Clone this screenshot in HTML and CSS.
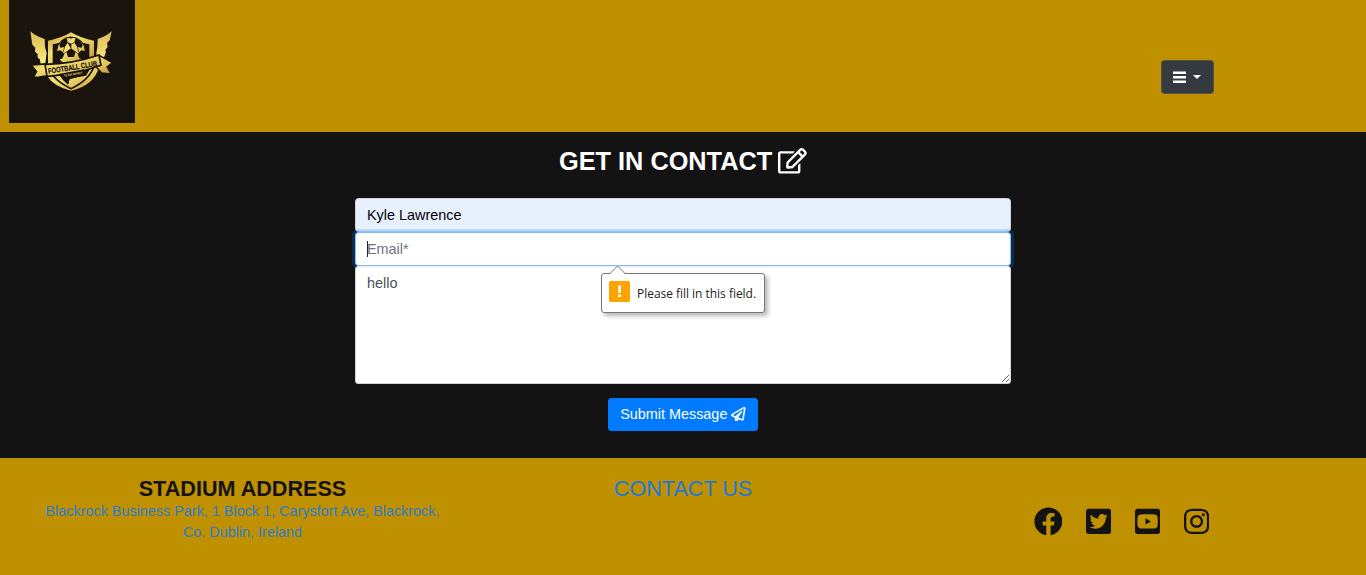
FILE: index.html
```html
<!DOCTYPE html>
<html lang="en">
<head>
<meta charset="utf-8">
<title>Contact</title>
<link rel="stylesheet" href="styles.css">
</head>
<body>
<header class="header">
  <svg class="logo" viewBox="27 0 378 369">
    <defs>
      <linearGradient id="gold" x1="0" y1="0" x2="1" y2="1">
        <stop offset="0" stop-color="#c99543"/><stop offset=".35" stop-color="#f3df72"/><stop offset=".65" stop-color="#e5c45c"/><stop offset="1" stop-color="#b98238"/>
      </linearGradient>
      <linearGradient id="wing" x1="0" y1="0" x2="0" y2="1">
        <stop offset="0" stop-color="#e0b955"/><stop offset="1" stop-color="#f7ee80"/>
      </linearGradient>
    </defs>
    <rect x="27" width="378" height="369" fill="#1a140f"/>
    <path fill="url(#wing)" d="M91 94q18 16 43 23l1 24 5 18-4 31-14 1-3-14-6-4v-11l-8-7 1-12-9-9zM335 94q-18 16-42 23l-1 24-3 18 2 14 22-3 5-14-2-6 7-9-2-12 8-8z"/>
    <path fill="url(#gold)" d="M144 122q37-6 69-25 32 19 69 25v50l-14 6v-45q-30-5-55-19-25 14-55 19v58l-14 5z"/>
    <path fill="url(#gold)" d="M213 272q-52-12-71-43l45-5q10 20 20 29l-4-17 55-9 17-28 23-1q-15 59-85 74z"/>
    <path fill="none" stroke="#1a140f" stroke-width="5" d="M158 226q20 24 55 40 55-25 69-67"/>
    <circle cx="213" cy="154" r="43" fill="url(#gold)" stroke="#1a140f" stroke-width="3"/>
    <path fill="#1a140f" d="M213 145l14 10-5 16h-18l-5-16zM186 121l14-7 3 14-9 13-13 2-3-8zM240 121l-14-7-3 14 9 13 13 2 3-8zM171 153l11-2 11 10-5 14-13 5q-6-13-4-27zM255 153l-11-2-11 10 5 14 13 5q6-13 4-27zM205 111h16l-8 5z"/>
    <path stroke="#1a140f" stroke-width="2" d="M213 145v-13l-10-4M213 132l10-4M199 155l-7 6M227 155l6 6M194 141l-5 15M232 141l5 15"/>
    <path fill="url(#gold)" stroke="#1a140f" stroke-width="4" d="M94 195l44-3 4 35-24 4-18 1 10-17zM297 166l40 22-16 13 12 21-28-3-18-20z"/>
    <path fill="url(#gold)" stroke="#1a140f" stroke-width="5" d="M135 193q84-1 162-28l6 31q-78 28-162 33z"/>
    <text class="logo-name" transform="rotate(-9 217 198) translate(143 210)" textLength="148" lengthAdjust="spacingAndGlyphs">FOOTBALL CLUB</text>
    <path fill="#1a140f" d="M176 222l76-14-7 20-36 10-5 16q-17-13-28-32z"/>
    <text class="logo-tag" transform="rotate(-9 217 222) translate(191 226)" textLength="56" lengthAdjust="spacingAndGlyphs">TEAM SPIRIT</text>
  </svg>
  <button class="menu" type="button" aria-label="Menu">
    <svg class="bars" viewBox="0 0 13 13"><path fill="#fff" d="M0 .5h13v2.6H0zM0 5h13v2.6H0zM0 9.5h13v2.6H0z"/></svg>
    <span class="caret"></span>
  </button>
</header>
<main class="contact">
  <h1 class="title">GET IN CONTACT
    <svg class="edit" viewBox="0 0 576 512"><path fill="currentColor" d="M402.3 344.9l32-32c5-5 13.7-1.5 13.7 5.7V464c0 26.5-21.5 48-48 48H48c-26.5 0-48-21.5-48-48V112c0-26.5 21.5-48 48-48h273.5c7.1 0 10.7 8.6 5.7 13.7l-32 32c-1.5 1.5-3.5 2.3-5.7 2.3H48v352h352V350.5c0-2.1.8-4.1 2.3-5.6zm156.6-201.8L296.3 405.7l-90.4 10c-26.2 2.9-48.5-19.2-45.6-45.6l10-90.4L432.9 17.1c22.9-22.9 59.9-22.9 82.7 0l43.2 43.2c22.9 22.9 22.9 60 .1 82.8zM460.1 174L402 115.9 216.2 301.8l-7.3 65.3 65.3-7.3L460.1 174zm64.8-79.7l-43.2-43.2c-4.1-4.1-10.8-4.1-14.8 0L436 82l58.1 58.1 30.9-30.9c4-4.2 4-10.8-.1-14.9z"/></svg>
  </h1>
  <form class="form">
    <input class="field filled" value="Kyle Lawrence">
    <div class="email">
      <input class="field focused" placeholder="Email*">
      <span class="cursor"></span>
      <div class="tip">
        <svg class="tip-arrow" viewBox="0 0 16 9"><path fill="#fff" stroke="#777" d="M0 8.5L7.5 1l7.5 7.5"/><path fill="#fff" d="M1 8h13v1H1z"/></svg>
        <svg class="warn" viewBox="0 0 21 21"><rect width="21" height="21" rx="1.5" fill="#ffa300"/><path fill="#fff" d="M9 4.5h3.2l-.4 7.5H9.4zM9 13.5h3v2.6H9z"/></svg>
        <span>Please fill in this field.</span>
      </div>
    </div>
    <textarea class="field message">hello</textarea>
    <button class="submit" type="button">Submit Message
      <svg class="plane" viewBox="0 0 512 512"><path fill="currentColor" stroke="currentColor" stroke-width="10" d="M440 6.5L24 246.4c-34.4 19.9-31.1 70.8 5.7 85.9L144 379.6V464c0 46.4 59.2 65.5 86.6 28.6l43.8-59.1 111.9 46.2c5.9 2.4 12.1 3.6 18.3 3.6 8.2 0 16.3-2.1 23.6-6.2 12.8-7.2 21.6-20 23.9-34.5l59.4-387.2c6.1-40.1-36.9-68.8-71.5-48.9zM192 464v-64.6l36.6 15.1L192 464zm212.6-28.7l-153.8-63.5L391 169.5c10.7-15.5-9.5-33.5-23.7-21.2L155.8 332.6 48 288 464 48l-59.4 387.3z"/></svg>
    </button>
  </form>
</main>
<footer class="footer">
  <section class="column">
    <h2 class="heading">STADIUM ADDRESS</h2>
    <a class="address">Blackrock Business Park, 1 Block 1, Carysfort Ave, Blackrock,<br>Co. Dublin, Ireland</a>
  </section>
  <section class="column"><a class="heading contact-link">CONTACT US</a></section>
  <section class="column social">
    <svg class="round" viewBox="0 0 512 512"><path d="M504 256C504 119 393 8 256 8S8 119 8 256c0 123.78 90.69 226.38 209.25 245V327.69h-63V256h63v-54.64c0-62.15 37-96.48 93.67-96.48 27.14 0 55.52 4.84 55.52 4.84v61h-31.28c-30.8 0-40.41 19.12-40.41 38.73V256h68.78l-11 71.69h-57.78V501C413.31 482.38 504 379.78 504 256z"/></svg>
    <svg viewBox="0 0 448 512"><path d="M400 32H48C21.5 32 0 53.5 0 80v352c0 26.5 21.5 48 48 48h352c26.5 0 48-21.5 48-48V80c0-26.5-21.5-48-48-48zm-48.9 158.8c.2 2.8.2 5.7.2 8.5 0 86.7-66 186.6-186.6 186.6-37.2 0-71.7-10.8-100.7-29.4 5.3.6 10.4.8 15.8.8 30.7 0 58.9-10.4 81.4-28-28.8-.6-53-19.5-61.3-45.5 10.1 1.5 19.2 1.5 29.6-1.2-30-6.1-52.5-32.5-52.5-64.4v-.8c8.7 4.9 18.9 7.9 29.6 8.3a65.447 65.447 0 0 1-29.2-54.6c0-12.2 3.2-23.4 8.9-33.1 32.3 39.8 80.8 65.8 135.2 68.6-9.3-44.5 24-80.6 64-80.6 18.9 0 35.9 7.9 47.9 20.7 14.8-2.8 29-8.3 41.6-15.8-4.9 15.2-15.2 28-28.8 36.1 13.2-1.4 26-5.1 37.8-10.2-8.9 13.1-20.1 24.7-32.9 34z"/></svg>
    <svg viewBox="0 0 448 512"><path d="M186.8 202.1l95.2 54.1-95.2 54.1V202.1zM448 80v352c0 26.5-21.5 48-48 48H48c-26.5 0-48-21.5-48-48V80c0-26.5 21.5-48 48-48h352c26.5 0 48 21.5 48 48zm-42 176.3s0-59.6-7.6-88.2c-4.2-15.8-16.5-28.2-32.2-32.4C337.9 128 224 128 224 128s-113.9 0-142.2 7.7c-15.7 4.2-28 16.6-32.2 32.4-7.6 28.5-7.6 88.2-7.6 88.2s0 59.6 7.6 88.2c4.2 15.8 16.5 27.7 32.2 31.9C110.1 384 224 384 224 384s113.9 0 142.2-7.7c15.7-4.2 28-16.1 32.2-31.9 7.6-28.5 7.6-88.1 7.6-88.1z"/></svg>
    <svg viewBox="0 0 448 512"><path d="M224.1 141c-63.6 0-114.9 51.3-114.9 114.9s51.3 114.9 114.9 114.9S339 319.5 339 255.9 287.7 141 224.1 141zm0 189.6c-41.1 0-74.7-33.5-74.7-74.7s33.5-74.7 74.7-74.7 74.7 33.5 74.7 74.7-33.6 74.7-74.7 74.7zm146.4-194.3c0 14.9-12 26.8-26.8 26.8-14.9 0-26.8-12-26.8-26.8s12-26.8 26.8-26.8 26.8 12 26.8 26.8zm76.1 27.2c-1.7-35.9-9.9-67.7-36.2-93.9-26.2-26.2-58-34.4-93.9-36.2-37-2.1-147.9-2.1-184.9 0-35.8 1.7-67.6 9.9-93.9 36.1s-34.4 58-36.2 93.9c-2.1 37-2.1 147.9 0 184.9 1.7 35.9 9.9 67.7 36.2 93.9s58 34.4 93.9 36.2c37 2.1 147.9 2.1 184.9 0 35.9-1.7 67.7-9.9 93.9-36.2 26.2-26.2 34.4-58 36.2-93.9 2.1-37 2.1-147.8 0-184.8zM398.8 388c-7.8 19.6-22.9 34.7-42.6 42.6-29.5 11.7-99.5 9-132.1 9s-102.7 2.6-132.1-9c-19.6-7.8-34.7-22.9-42.6-42.6-11.7-29.5-9-99.5-9-132.1s-2.6-102.7 9-132.1c7.8-19.6 22.9-34.7 42.6-42.6 29.5-11.7 99.5-9 132.1-9s102.7-2.6 132.1 9c19.6 7.8 34.7 22.9 42.6 42.6 11.7 29.5 9 99.5 9 132.1s2.7 102.7-9 132.1z"/></svg>
  </section>
</footer>
</body>
</html>
```
FILE: styles.css
```css
* { box-sizing: border-box; }
body {
  margin: 0;
  height: 575px;
  overflow: hidden;
  display: flex;
  flex-direction: column;
  background: #131313;
  font: 14.4px/21px "Liberation Sans", Arial, sans-serif;
}
.header {
  height: 132px;
  padding: 0 152px 0 9px;
  background: #bf9000;
  display: flex;
  justify-content: space-between;
  align-items: flex-start;
}
.logo { width: 126px; height: 123px; display: block; }
.logo-name { font: bold 23px "Liberation Sans", Arial, sans-serif; fill: #1a140f; stroke: #1a140f; stroke-width: .7px; }
.logo-tag { font: bold 9px "Liberation Sans", Arial, sans-serif; fill: #e6cf73; }
.menu {
  width: 53px;
  height: 34px;
  margin-top: 60px;
  padding: 0 1px 0 0;
  display: flex;
  align-items: center;
  justify-content: center;
  gap: 7px;
  border: 1px solid #53524a;
  border-radius: 3.5px;
  background: #343a40;
}
.bars { width: 13px; height: 13px; }
.caret { margin-top: -1px; border: 4.5px solid transparent; border-top-color: #fff; border-bottom: 0; }
.contact {
  height: 326px;
  padding-top: 14px;
  display: flex;
  flex-direction: column;
  align-items: center;
}
.title {
  margin: 0 0 21px;
  display: flex;
  align-items: center;
  gap: 6px;
  color: #fff;
  font-size: 25.3px;
  line-height: 31px;
}
.edit { width: 28.8px; height: 25.6px; margin-top: -1px; }
.form { width: 656px; display: flex; flex-direction: column; align-items: center; }
.field {
  display: block;
  width: 100%;
  height: 34px;
  margin: 0;
  padding: 5px 11px;
  border: 1px solid #ced4da;
  border-radius: 3.5px;
  outline: 0;
  background: #fff;
  color: #495057;
  font: inherit;
}
.field::placeholder { color: #6c757d; opacity: 1; }
.filled { background: #e8f0fe; color: #000; }
.email { position: relative; width: 100%; }
.focused { border-color: #80bdff; box-shadow: 0 0 0 2.8px rgba(0, 123, 255, .25); }
.cursor { position: absolute; left: 12px; top: 9px; width: 1px; height: 16px; background: #222; }
.message { position: relative; height: 118px; padding-top: 6px; border-top-color: #e9edf2; resize: vertical; }
.tip {
  position: absolute;
  z-index: 2;
  left: 246px;
  top: 41px;
  width: 164px;
  height: 40px;
  padding: 0 7px;
  display: flex;
  align-items: center;
  gap: 7px;
  border: 1px solid #777;
  border-radius: 3px;
  background: #fff;
  box-shadow: 3px 3px 4px rgba(0, 0, 0, .28);
  color: #222;
  font: 12px "Open Sans", "Noto Sans", sans-serif;
  letter-spacing: -.03px;
  white-space: nowrap;
}
.tip-arrow { position: absolute; left: 8px; top: -9px; width: 16px; height: 9px; }
.warn { width: 21px; height: 21px; flex: none; margin-top: -3px; }
.submit {
  width: 150px;
  height: 33px;
  margin-top: 14px;
  padding: 0;
  display: flex;
  align-items: center;
  justify-content: center;
  gap: 4px;
  border: 0;
  border-radius: 3.5px;
  background: #007bff;
  color: #fff;
  font: inherit;
}
.plane { width: 14.4px; height: 14.4px; margin-top: -1px; }
.footer {
  height: 117px;
  padding: 17px 15px 0;
  display: grid;
  grid-template-columns: 455px 426px 455px;
  background: #bf9000;
}
.column { text-align: center; }
.heading { display: block; margin: 0; padding-top: 1px; font-size: 21.6px; line-height: 25px; color: #131313; }
.address { color: #2e7cc9; }
.contact-link { color: #1c79dc; }
.social {
  padding: 32px 142px 0 0;
  display: flex;
  justify-content: flex-end;
  align-items: flex-start;
  gap: 23.7px;
}
.social svg { width: 25.2px; height: 28.8px; fill: #131313; }
.social .round { width: 28.8px; }
```
